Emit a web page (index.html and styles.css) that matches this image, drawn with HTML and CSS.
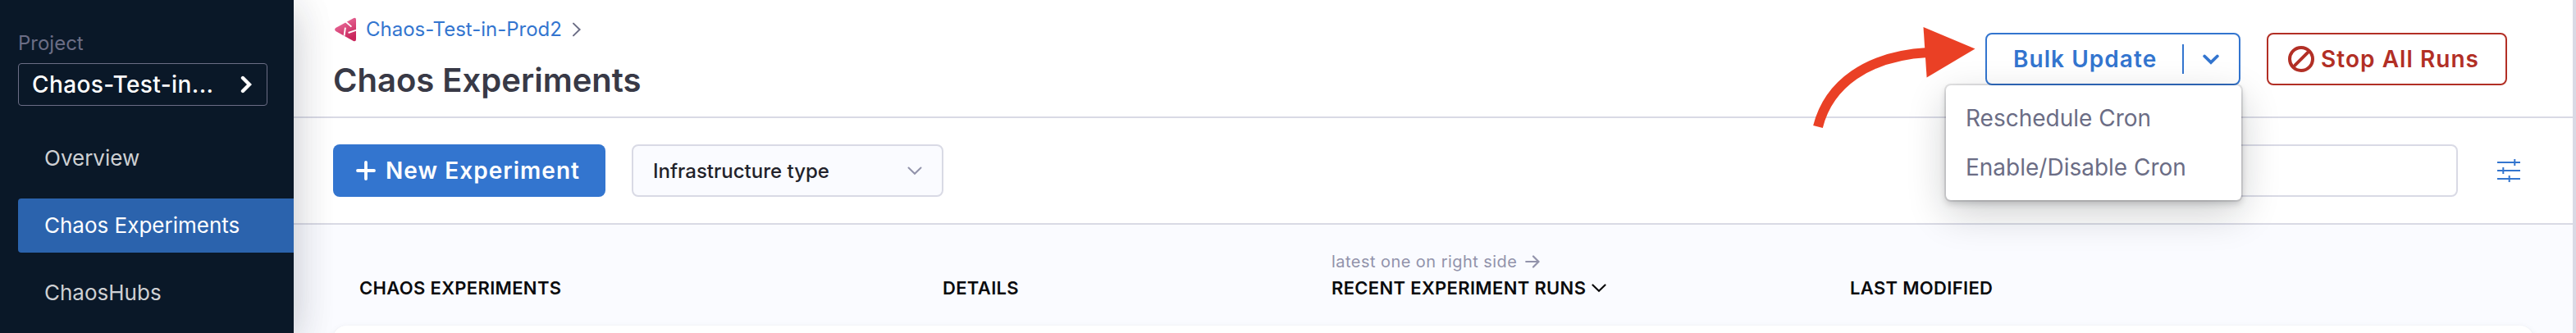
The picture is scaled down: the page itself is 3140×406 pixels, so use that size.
FILE: index.html
```html
<!DOCTYPE html>
<html lang="en">
<head>
<meta charset="utf-8">
<title>Chaos Experiments</title>
<link rel="stylesheet" href="styles.css">
</head>
<body>
<div class="app">
  <aside class="sidebar">
    <div class="project-label"><span>Project</span></div>
    <div class="project-select">
      <span>Chaos-Test-in...</span>
      <svg width="14" height="22" viewBox="0 0 14 22"><path d="M3 3l8 8-8 8" fill="none" stroke="#fff" stroke-width="4.4" stroke-linecap="round" stroke-linejoin="miter"/></svg>
    </div>
    <nav class="nav">
      <a class="nav-item"><span>Overview</span></a>
      <a class="nav-item active"><span>Chaos Experiments</span></a>
      <a class="nav-item"><span>ChaosHubs</span></a>
    </nav>
  </aside>
  <main class="main">
    <header class="header">
      <div class="heading">
        <div class="breadcrumb">
          <svg class="logo" width="26" height="30" viewBox="0 0 26 30">
            <defs><linearGradient id="pink" x1="0" y1="0" x2="0.5" y2="1"><stop offset="0" stop-color="#f07ba8"/><stop offset="1" stop-color="#c9265c"/></linearGradient></defs>
            <path d="M1.2 13L22.8 1.2Q26 0 26 3V27Q26 30 22.8 29L1.2 17Q-1 15 1.2 13Z" fill="url(#pink)"/>
            <path d="M13.2 5.2L20.4 11.6M12.9 12.6L11.6 22.6M16.6 19L26 15.8" stroke="#fff" stroke-width="1.9" fill="none"/>
          </svg>
          <span class="crumb">Chaos-Test-in-Prod2</span>
          <svg width="12" height="18" viewBox="0 0 12 18"><path d="M2 1.6l7.6 7.4L2 16.400" fill="none" stroke="#6b6d85" stroke-width="2" stroke-linecap="round"/></svg>
        </div>
        <h1 class="title">Chaos Experiments</h1>
      </div>
      <div class="actions">
        <div class="split">
          <button class="btn bulk">
            <span>Bulk Update</span>
            <i class="divider"></i>
            <svg width="20" height="13" viewBox="0 0 20 13"><path d="M2.200 2.500l7.800 7.500 7.800-7.500" fill="none" stroke="#3375cf" stroke-width="3.800" stroke-linecap="round"/></svg>
          </button>
          <div class="menu">
            <div class="menu-item"><span>Reschedule Cron</span></div>
            <div class="menu-item"><span>Enable/Disable Cron</span></div>
          </div>
          <svg class="pointer" width="202" height="126" viewBox="0 0 202 126">
            <path d="M6 121.500C19 70 66 35 140 31" fill="none" stroke="#ea4025" stroke-width="12"/>
            <path d="M134.500 0L197.500 26.500 138.600 61.500Z" fill="#ea4025"/>
          </svg>
        </div>
        <button class="btn stop">
          <svg width="32" height="32" viewBox="0 0 32 32"><g fill="none" stroke="#b22f25" stroke-width="4"><circle cx="16" cy="16" r="14"/><path d="M6.300 25.700L25.700 6.300"/></g></svg>
          <span>Stop All Runs</span>
        </button>
      </div>
    </header>
    <section class="toolbar">
      <button class="new-btn">
        <svg width="24" height="24" viewBox="0 0 24 24"><path d="M12 2v20M2 12h20" stroke="#fff" stroke-width="3.800" stroke-linecap="round"/></svg>
        <span>New Experiment</span>
      </button>
      <div class="infra">
        <span>Infrastructure type</span>
        <svg width="18" height="11" viewBox="0 0 18 11"><path d="M1.500 1.500L9 8.800l7.500-7.300" fill="none" stroke="#9293ab" stroke-width="2" stroke-linecap="round"/></svg>
      </div>
      <div class="search"></div>
      <svg class="filter" width="28" height="28" viewBox="0 0 28 28"><path d="M0 4h28M0 14h28M0 24h28M21.300 0v8M7.300 10v8M14.700 20v8" stroke="#3375cf" stroke-width="2"/></svg>
    </section>
    <section class="table">
      <div class="table-head">
        <div class="th"><span>CHAOS EXPERIMENTS</span></div>
        <div class="th"><span>DETAILS</span></div>
        <div class="th">
          <div class="hint"><span>latest one on right side</span>
            <svg width="18" height="16" viewBox="0 0 18 16"><path d="M1.200 8H16M10 1.500L16.500 8 10 14.500" fill="none" stroke="#9293ab" stroke-width="2.200" stroke-linecap="round"/></svg>
          </div>
          <div class="sort"><span>RECENT EXPERIMENT RUNS</span>
            <svg width="18" height="11" viewBox="0 0 18 11"><path d="M1.500 1.500L9 8.800l7.500-7.300" fill="none" stroke="#0b0b0d" stroke-width="2.200" stroke-linecap="round"/></svg>
          </div>
        </div>
        <div class="th"><span>LAST MODIFIED</span></div>
      </div>
      <div class="row-card"></div>
    </section>
  </main>
  <div class="scrollbar"></div>
</div>
</body>
</html>
```

FILE: styles.css
```css
* { box-sizing: border-box; }
body { margin: 0; font-family: Inter, sans-serif; background: #fff; }
button { font: inherit; background: none; border: 0; margin: 0; padding: 0; }
svg { display: block; flex: none; }
span { white-space: nowrap; }

.app { display: flex; width: 3140px; height: 406px; overflow: hidden; }

.sidebar {
  position: relative;
  z-index: 2;
  flex: none;
  width: 358px;
  padding: 37px 0 0 22px;
  background: #0a1828;
  box-shadow: 0 16px 48px rgba(40, 41, 61, .16), 0 4px 48px rgba(40, 41, 61, .12);
}
.project-label { height: 40px; line-height: 32px; font-size: 24px; color: #6b6d85; }
.project-select {
  display: flex;
  align-items: center;
  justify-content: space-between;
  width: 304px;
  height: 52px;
  padding: 0 18px 0 16px;
  border: 1px solid #6b6d85;
  border-radius: 4px;
  color: #fff;
  font-size: 28px;
  font-weight: 500;
  letter-spacing: .4px;
}
.nav { display: flex; flex-direction: column; gap: 16px; margin-top: 31px; }
.nav-item {
  display: flex;
  align-items: center;
  height: 66px;
  padding: 0 0 1px 32px;
  border-radius: 4px 0 0 4px;
  font-size: 26px;
  color: #ced0d3;
}
.nav-item.active { background: #2b63ad; color: #fff; }

.main { flex: 1; min-width: 0; background: #fafbff; }

.header {
  display: flex;
  justify-content: space-between;
  height: 144px;
  padding: 20px 80px 0 48px;
  background: #fff;
  border-bottom: 2px solid #d9dae5;
}
.breadcrumb { display: flex; align-items: center; height: 32px; padding-left: 2px; }
.crumb { margin: -2px 12px 0 12px; font-size: 24px; color: #3375cf; }
.title { margin: 20px 0 0; line-height: 52px; font-size: 40px; font-weight: 600; color: #383946; }

.actions { display: flex; gap: 32px; padding-top: 20px; }
.split { position: relative; width: 311px; height: 64px; }
.btn {
  display: flex;
  align-items: center;
  height: 64px;
  border: 2px solid #3375cf;
  border-radius: 8px;
  font-size: 28px;
  font-weight: 600;
  letter-spacing: 1.05px;
  color: #3375cf;
}
.bulk { width: 311px; padding: 0 24px 0 32px; }
.bulk span { flex: 1; text-align: left; }
.divider { width: 2px; height: 36px; margin-right: 23px; background: #3375cf; }
.stop { width: 293px; padding-left: 24px; gap: 8px; border-color: #b22f25; color: #b22f25; }

.menu {
  position: absolute;
  z-index: 3;
  top: 64px;
  right: -1px;
  width: 360px;
  height: 140px;
  padding: 10px 0;
  border-radius: 6px;
  background: #fff;
  box-shadow: 0 0 0 2px rgba(16, 22, 26, .1), 0 4px 8px rgba(16, 22, 26, .2), 0 16px 48px rgba(16, 22, 26, .2);
}
.menu-item { display: flex; align-items: center; height: 60px; padding-left: 24px; font-size: 28px; color: #6b6d85; }
.pointer { position: absolute; z-index: 4; left: -210px; top: -7px; }

.toolbar {
  display: flex;
  align-items: center;
  height: 130px;
  padding: 0 64px 0 48px;
  background: #fff;
  border-bottom: 2px solid #d9dae5;
}
.new-btn {
  display: flex;
  align-items: center;
  gap: 12px;
  width: 332px;
  height: 64px;
  padding-left: 28px;
  border-radius: 8px;
  background: #3375cf;
  color: #fff;
  font-size: 28px;
  font-weight: 600;
  letter-spacing: 1.05px;
}
.infra {
  display: flex;
  align-items: center;
  justify-content: space-between;
  width: 380px;
  height: 64px;
  margin-left: 32px;
  padding: 0 24px;
  border: 2px solid #d9dae5;
  border-radius: 8px;
  background: #fafbff;
  color: #22222a;
  font-size: 24px;
  font-weight: 500;
}
.search { width: 520px; height: 64px; margin-left: auto; border: 2px solid #d9dae5; border-radius: 8px; background: #fff; }
.filter { margin-left: 48px; }

.table { padding: 0 48px; }
.table-head {
  display: grid;
  grid-template-columns: 711px 474px 632px 1fr;
  align-items: end;
  height: 123px;
  padding: 0 0 30px 32px;
  font-size: 22px;
  line-height: 32px;
  font-weight: 600;
  letter-spacing: .33px;
  color: #0b0b0d;
}
.hint { display: flex; align-items: center; gap: 10px; font-size: 20px; font-weight: 400; letter-spacing: .45px; color: #9293ab; }
.sort { display: flex; align-items: center; gap: 7px; }
.row-card {
  height: 80px;
  border-radius: 16px;
  background: #fff;
  box-shadow: 0 0 2px rgba(40, 41, 61, .04), 0 4px 8px rgba(96, 97, 112, .16);
}
.scrollbar { flex: none; width: 4px; background: #d9dae5; }
```
